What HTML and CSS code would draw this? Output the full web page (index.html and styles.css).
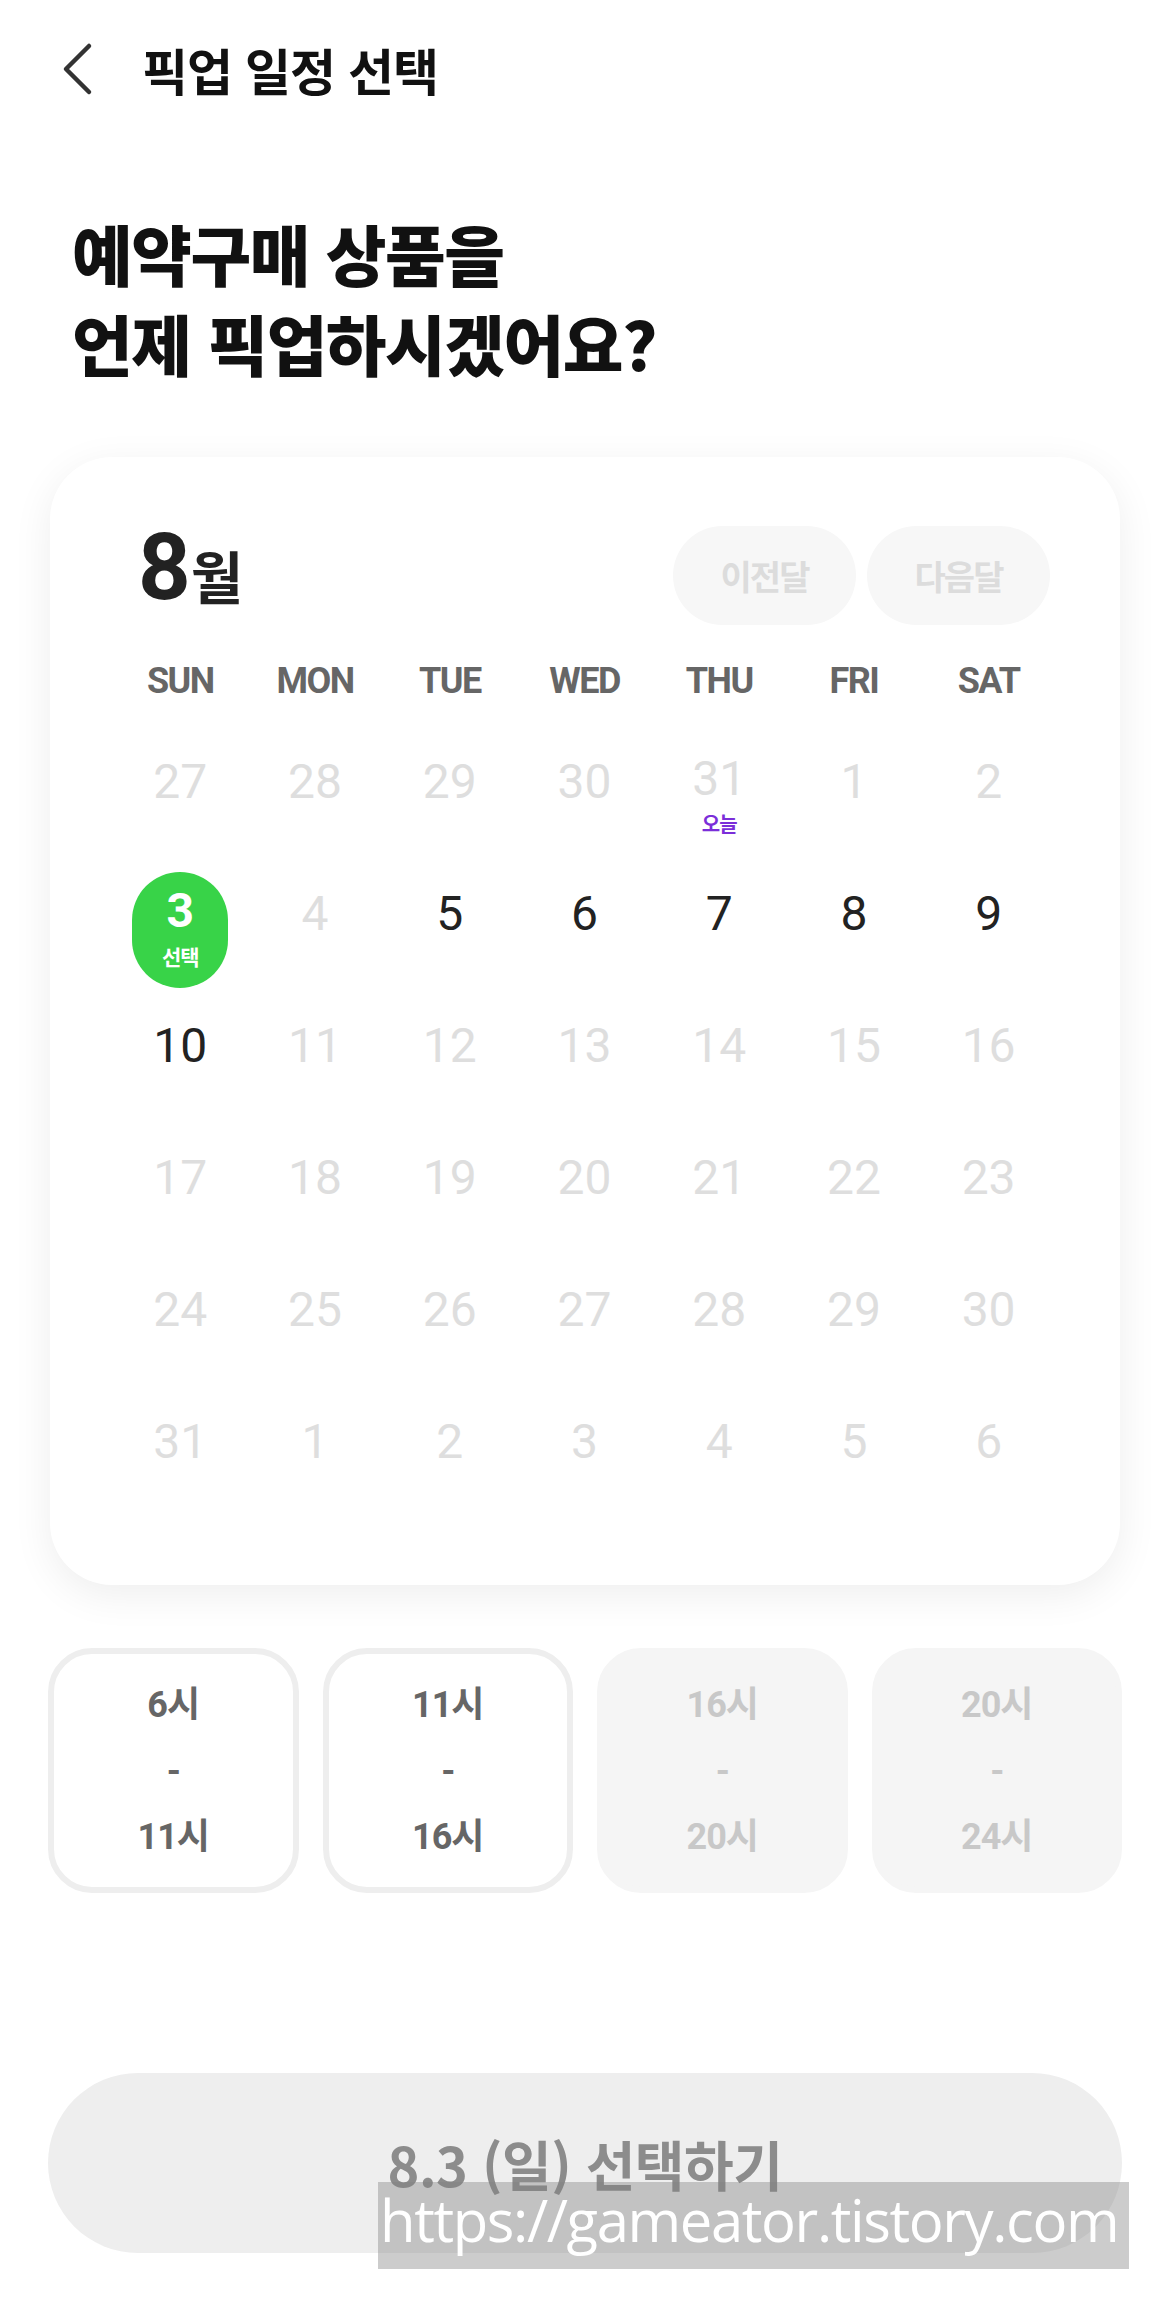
FILE: index.html
```html
<!DOCTYPE html>
<html lang="ko">
<head>
    <meta charset="UTF-8">
    <meta name="viewport" content="width=device-width, initial-scale=1.0">
    <title>픽업 일정 선택</title>
    <link rel="stylesheet" href="styles.css">
</head>

<body>
    <div class="page">
        <div class="topbar">
            <svg class="back" width="40" height="60" viewBox="0 0 40 60">
                <path d="M31 7 L8 30 L31 53" fill="none" stroke="#333" stroke-width="4.5" stroke-linecap="round" stroke-linejoin="round"/>
            </svg>
            <h1 class="title">픽업 일정 선택</h1>
        </div>

        <h2 class="question">예약구매 상품을<br>언제 픽업하시겠어요?</h2>

        <div class="card">
            <div class="month-head">
                <div class="month"><span class="month-num">8</span><span class="month-unit">월</span></div>
                <div class="month-nav">
                    <button class="nav-btn">이전달</button>
                    <button class="nav-btn">다음달</button>
                </div>
            </div>

            <div class="weekdays">
                <div>SUN</div>
                <div>MON</div>
                <div>TUE</div>
                <div>WED</div>
                <div>THU</div>
                <div>FRI</div>
                <div>SAT</div>
            </div>

            <div class="days">
                <div class="day off"><div class="day-in"><span class="num">27</span></div></div>
                <div class="day off"><div class="day-in"><span class="num">28</span></div></div>
                <div class="day off"><div class="day-in"><span class="num">29</span></div></div>
                <div class="day off"><div class="day-in"><span class="num">30</span></div></div>
                <div class="day off tagged"><div class="day-in"><span class="num">31</span><span class="tag today">오늘</span></div></div>
                <div class="day off"><div class="day-in"><span class="num">1</span></div></div>
                <div class="day off"><div class="day-in"><span class="num">2</span></div></div>

                <div class="day selected tagged"><div class="day-in"><span class="num">3</span><span class="tag">선택</span></div></div>
                <div class="day off"><div class="day-in"><span class="num">4</span></div></div>
                <div class="day"><div class="day-in"><span class="num">5</span></div></div>
                <div class="day"><div class="day-in"><span class="num">6</span></div></div>
                <div class="day"><div class="day-in"><span class="num">7</span></div></div>
                <div class="day"><div class="day-in"><span class="num">8</span></div></div>
                <div class="day"><div class="day-in"><span class="num">9</span></div></div>

                <div class="day"><div class="day-in"><span class="num">10</span></div></div>
                <div class="day off"><div class="day-in"><span class="num">11</span></div></div>
                <div class="day off"><div class="day-in"><span class="num">12</span></div></div>
                <div class="day off"><div class="day-in"><span class="num">13</span></div></div>
                <div class="day off"><div class="day-in"><span class="num">14</span></div></div>
                <div class="day off"><div class="day-in"><span class="num">15</span></div></div>
                <div class="day off"><div class="day-in"><span class="num">16</span></div></div>

                <div class="day off"><div class="day-in"><span class="num">17</span></div></div>
                <div class="day off"><div class="day-in"><span class="num">18</span></div></div>
                <div class="day off"><div class="day-in"><span class="num">19</span></div></div>
                <div class="day off"><div class="day-in"><span class="num">20</span></div></div>
                <div class="day off"><div class="day-in"><span class="num">21</span></div></div>
                <div class="day off"><div class="day-in"><span class="num">22</span></div></div>
                <div class="day off"><div class="day-in"><span class="num">23</span></div></div>

                <div class="day off"><div class="day-in"><span class="num">24</span></div></div>
                <div class="day off"><div class="day-in"><span class="num">25</span></div></div>
                <div class="day off"><div class="day-in"><span class="num">26</span></div></div>
                <div class="day off"><div class="day-in"><span class="num">27</span></div></div>
                <div class="day off"><div class="day-in"><span class="num">28</span></div></div>
                <div class="day off"><div class="day-in"><span class="num">29</span></div></div>
                <div class="day off"><div class="day-in"><span class="num">30</span></div></div>

                <div class="day off"><div class="day-in"><span class="num">31</span></div></div>
                <div class="day off"><div class="day-in"><span class="num">1</span></div></div>
                <div class="day off"><div class="day-in"><span class="num">2</span></div></div>
                <div class="day off"><div class="day-in"><span class="num">3</span></div></div>
                <div class="day off"><div class="day-in"><span class="num">4</span></div></div>
                <div class="day off"><div class="day-in"><span class="num">5</span></div></div>
                <div class="day off"><div class="day-in"><span class="num">6</span></div></div>
            </div>
        </div>

        <div class="slots">
            <div class="slot"><span>6시</span><span>-</span><span>11시</span></div>
            <div class="slot"><span>11시</span><span>-</span><span>16시</span></div>
            <div class="slot disabled"><span>16시</span><span>-</span><span>20시</span></div>
            <div class="slot disabled"><span>20시</span><span>-</span><span>24시</span></div>
        </div>

        <button class="confirm">8.3 (일) 선택하기</button>
    </div>

    <div class="watermark">https://gameator.tistory.com</div>
</body>
</html>
```

FILE: styles.css
```css
*{
    box-sizing: border-box;
    font-family: Roboto, "Noto Sans CJK KR", sans-serif;
}
body{
    margin: 0;
    background: #ffffff;
    position: relative;
    min-height: 2310px;
}
.page{
    padding: 0 48px;
}

/* top bar */
.topbar{
    height: 138px;
    display: flex;
    align-items: center;
    padding-left: 10px;
}
.back{
    display: block;
}
.title{
    margin: 0 0 0 44px;
    font-size: 50px;
    font-weight: 700;
    letter-spacing: -1px;
    color: #111;
    font-family: "Noto Sans CJK KR", sans-serif;
}

.question{
    margin: 69px 0 0 24px;
    font-size: 66px;
    line-height: 90px;
    font-weight: 900;
    letter-spacing: -1.5px;
    color: #111;
    font-family: "Noto Sans CJK KR", sans-serif;
}

/* calendar card */
.card{
    margin: 70px 2px 0 2px;
    background: #fff;
    border-radius: 62px;
    box-shadow: 0 10px 40px rgba(0, 0, 0, 0.07);
    padding: 69px 64px 77px 63px;
}
.month-head{
    display: flex;
    justify-content: space-between;
    align-items: center;
    height: 99px;
    margin: 0 6px 0 25px;
}
.month{
    color: #222;
    font-weight: 700;
    display: flex;
    align-items: baseline;
    margin-top: -14px;
}
.month-num{
    font-size: 92px;
    line-height: 92px;
}
.month-unit{
    font-size: 57px;
    letter-spacing: -3px;
    font-family: "Noto Sans CJK KR", sans-serif;
}
.month-nav{
    display: flex;
    gap: 11px;
}
.nav-btn{
    width: 183px;
    height: 99px;
    border: none;
    border-radius: 50px;
    background: #f7f7f7;
    color: #dcdcdc;
    font-size: 34px;
    font-weight: 700;
    letter-spacing: -2px;
    font-family: "Noto Sans CJK KR", sans-serif;
}

.weekdays{
    display: grid;
    grid-template-columns: repeat(7, 1fr);
    margin: 30px 0 9px 0;
}
.weekdays div{
    text-align: center;
    font-size: 36px;
    line-height: 52px;
    font-weight: 700;
    letter-spacing: -1.5px;
    color: #666;
}

.days{
    display: grid;
    grid-template-columns: repeat(7, 1fr);
}
.day{
    height: 132px;
    display: flex;
    justify-content: center;
    align-items: flex-start;
}
.day-in{
    width: 96px;
    height: 116px;
    margin-top: 24px;
    padding-top: 16px;
    border-radius: 48px;
    display: flex;
    flex-direction: column;
    align-items: center;
}
.num{
    font-size: 48px;
    line-height: 52px;
    color: #222;
}
.day.tagged .num{
    margin-top: -3px;
}
.day.off .num{
    color: #dedede;
}
.tag{
    font-size: 20px;
    line-height: 22px;
    font-weight: 700;
    letter-spacing: -1px;
    margin-top: 8px;
    font-family: "Noto Sans CJK KR", sans-serif;
}
.tag.today{
    color: #7b2ed9;
}
.day.selected .day-in{
    background: #38d348;
}
.day.selected .num{
    color: #fff;
    font-weight: 700;
}
.day.selected .tag{
    color: #fff;
    font-size: 21px;
}

/* time slots */
.slots{
    display: grid;
    grid-template-columns: repeat(4, 1fr);
    gap: 24px;
    margin-top: 63px;
}
.slot{
    height: 245px;
    border: 6px solid #eeeeee;
    border-radius: 44px;
    display: flex;
    flex-direction: column;
    align-items: center;
    justify-content: center;
    color: #666;
    font-size: 36px;
    line-height: 66px;
    font-weight: 700;
    letter-spacing: -1px;
}
.slot.disabled{
    border-color: #f5f5f5;
    background: #f5f5f5;
    color: #c8c8c8;
}

.confirm{
    display: block;
    width: 100%;
    height: 180px;
    margin-top: 180px;
    border: none;
    border-radius: 90px;
    background: #eeeeee;
    color: #8c8c8c;
    font-size: 54px;
    font-weight: 700;
    letter-spacing: -0.5px;
    font-family: "Noto Sans CJK KR", sans-serif;
}

.watermark{
    position: absolute;
    left: 378px;
    top: 2182px;
    width: 751px;
    height: 87px;
    background: rgba(128, 128, 128, 0.4);
    color: #fff;
    font-family: "Open Sans", sans-serif;
    font-size: 58px;
    line-height: 76px;
    letter-spacing: -1.4px;
    padding-left: 2px;
    white-space: nowrap;
    overflow: hidden;
}
```
